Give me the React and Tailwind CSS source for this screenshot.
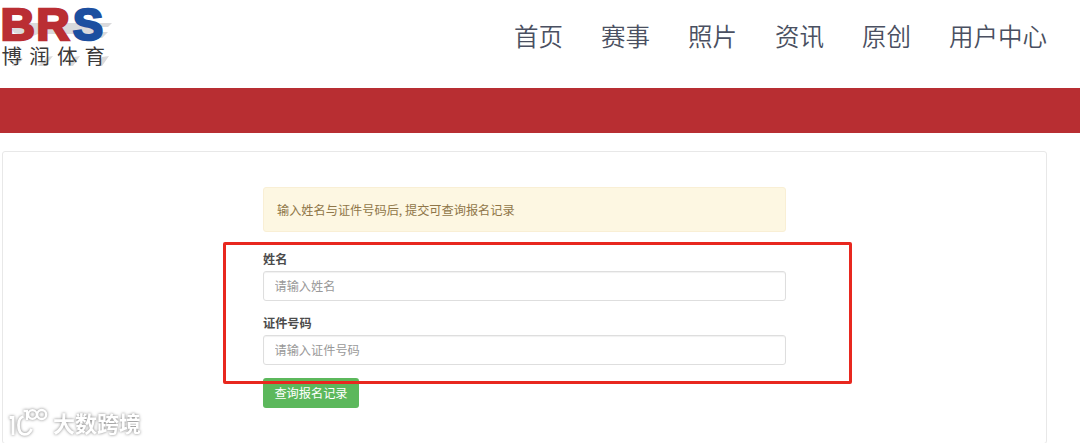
const menus = ["首页", "赛事", "照片", "资讯", "原创", "用户中心"]

const campos = [
  { id: "name", label: "姓名", placeholder: "请输入姓名" },
  { id: "idcard", label: "证件号码", placeholder: "请输入证件号码" },
]

function Logo() {
  return (
    <svg width="120" height="72" viewBox="0 0 120 72" className="shrink-0">
      <defs>
        <filter id="soft" x="-10%" y="-10%" width="120%" height="120%">
          <feGaussianBlur stdDeviation="0.6" />
        </filter>
      </defs>

      {/* sombra inclinada */}
      <g fill="#dadadc" filter="url(#soft)">
        <path d="M12 29 L22 23 H112 L108 27 H92 L98 32 L108 32 L102 38 H96 L88 34 L38 34 L30 37 L14 33 Z" />
        <path d="M12 66 L19 56 L23 59 L16 66 Z M38 66 L47 57 L53 56 L45 66 Z M68 66 L74 57 L80 56 L73 66 Z M98 66 L102 57 L109 56 L102 66 Z" />
      </g>

      <g className="font-['Liberation_Sans',sans-serif] font-bold" fontSize="43.5" strokeWidth="2.6">
        <text x="0.8" y="39.6" fill="#ba2e33" stroke="#ba2e33" textLength="34" lengthAdjust="spacingAndGlyphs">B</text>
        <text x="36.5" y="39.6" fill="#ba2e33" stroke="#ba2e33" textLength="33" lengthAdjust="spacingAndGlyphs">R</text>
        <text x="73" y="39.6" fill="#1c4fa0" stroke="#1c4fa0" textLength="30" lengthAdjust="spacingAndGlyphs">S</text>
      </g>
      <text
        x="1.5"
        y="64"
        fontSize="20.5"
        letterSpacing="7.2"
        fill="#3b3939"
        className="font-['Noto_Sans_CJK_SC',sans-serif]"
      >
        博润体育
      </text>
    </svg>
  )
}

function Watermark() {
  return (
    <div className="absolute left-[8px] top-[405px] flex h-[37px] items-center gap-[5px] drop-shadow-[0_0_1.5px_rgba(0,0,0,0.5)]">
      <svg width="40" height="37" viewBox="0 0 40 37" fill="none" stroke="#fff" strokeWidth="2.8">
        <path d="M1.5 12.5 H5 V30" />
        <path d="M15.5 11.5 C11.5 12.5 10.5 16 10.5 20 C10.5 32 21 31.5 23.5 24" />
        <path d="M15.5 6 H19 V15" strokeWidth="2.3" />
        <circle cx="24.5" cy="9.5" r="4.3" strokeWidth="2.3" />
        <circle cx="33.7" cy="9.5" r="4.5" strokeWidth="2.3" />
      </svg>
      <span className="-mt-[4px] text-[22px] leading-none font-bold text-white">大数跨境</span>
    </div>
  )
}

export default function App() {
  return (
    <div className="relative h-[443px] w-[1080px] overflow-hidden bg-white font-['Noto_Sans_CJK_SC',sans-serif]">
      <header className="flex h-[88px] items-start justify-between pr-[33px]">
        <Logo />
        <nav className="flex gap-[38px] pt-[18px] text-[24.5px] leading-[36px] font-[350] text-[#4a5061]">
          {menus.map((menu) => (
            <a key={menu} href="#">
              {menu}
            </a>
          ))}
        </nav>
      </header>

      <div className="h-[45px] bg-[#b82e32]" />

      <main className="mt-[18px] ml-[2px] h-[293px] w-[1045px] rounded-[3px] border border-[#e8e8e8] pt-[35px] pl-[260px]">
        <form className="relative w-[523px] text-[12.2px]">
          <div className="flex h-[45px] items-center rounded-[3px] border border-[#f9efd5] bg-[#fdf7e2] px-[13px] pt-px text-[#8f7648]">
            输入姓名与证件号码后, 提交可查询报名记录
          </div>

          <div className="mt-[17px] flex flex-col gap-[12px]">
            {campos.map(({ id, label, placeholder }) => (
              <div key={id}>
                <label htmlFor={id} className="block h-[22px] leading-[20px] font-bold text-[#4c4c4c]">
                  {label}
                </label>
                <input
                  id={id}
                  placeholder={placeholder}
                  className="block h-[30px] w-full rounded-[3px] border border-[#dedede] px-[10.5px] shadow-[inset_0_1px_1px_rgba(0,0,0,0.06)] placeholder:text-[#999]"
                />
              </div>
            ))}
          </div>

          <button type="button" className="mt-[13px] h-[30px] w-[96px] rounded-[3px] bg-[#5cb85c] text-white">
            查询报名记录
          </button>

          {/* destaque em volta dos campos */}
          <div className="pointer-events-none absolute top-[55px] left-[-40px] h-[142px] w-[629px] rounded-[2px] border-[3px] border-[#e8281f]" />
        </form>
      </main>

      <Watermark />
    </div>
  )
}
